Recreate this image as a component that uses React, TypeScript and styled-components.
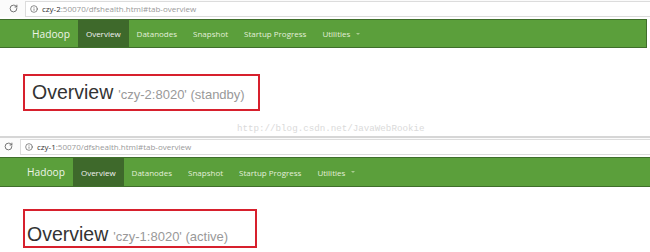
import { Info, RotateCw } from 'lucide-react'
import { createGlobalStyle, styled } from 'styled-components'

const Global = createGlobalStyle`
  html, body {
    margin: 0;
    padding: 0;
    background: #fff;
  }
  body {
    width: 650px;
    height: 252px;
    overflow: hidden;
    font-family: "Open Sans", "Noto Sans", sans-serif;
  }
`

const Page = styled.div`
  position: relative;
  display: flex;
  flex-direction: column;
  width: 650px;
  height: 252px;
`

const Screen = styled.section<{ $last?: boolean }>`
  display: flex;
  flex-direction: column;
  border-bottom: ${p => (p.$last ? 'none' : '2px solid #d6d6d6')};
`

const AddressBar = styled.div<{ $indent: number; $height: number }>`
  display: flex;
  align-items: center;
  gap: 7px;
  height: ${p => p.$height}px;
  padding-left: ${p => p.$indent}px;
  background: #fbfbfb;
  color: #5f6368;
`

const UrlBox = styled.div`
  flex: 1;
  display: flex;
  align-items: center;
  gap: 4px;
  height: 14px;
  padding-left: 4px;
  background: #fff;
  border: 1px solid #dcdcdc;
  border-right: none;
  font-size: 8px;
  color: #9a9a9a;
  white-space: nowrap;
  b {
    font-weight: 400;
    color: #333;
  }
`

const Navbar = styled.nav<{ $indent: number; $height: number; $edge?: boolean }>`
  display: flex;
  align-items: stretch;
  height: ${p => p.$height}px;
  margin-top: 2px;
  margin-right: ${p => (p.$edge ? 3 : 0)}px;
  padding-left: ${p => p.$indent}px;
  background: #5b9f3b;
  border-top: 1px solid #3f6e2b;
  border-bottom: 1px solid #3f6e2b;
  border-right: ${p => (p.$edge ? '1px solid #3f6e2b' : 'none')};
`

const Brand = styled.span`
  display: flex;
  align-items: center;
  margin-right: 8px;
  font-size: 10.2px;
  color: #eef5e9;
`

const NavItem = styled.span<{ $active?: boolean }>`
  display: flex;
  align-items: center;
  gap: 4px;
  padding: 0 8px;
  font-size: 8px;
  color: ${p => (p.$active ? '#f2f2f2' : '#e3efda')};
  background: ${p => (p.$active ? '#3e692b' : 'transparent')};
`

const Caret = styled.span`
  width: 0;
  height: 0;
  margin-left: 2px;
  border-left: 2px solid transparent;
  border-right: 2px solid transparent;
  border-top: 2px solid #a9cc92;
`

const Content = styled.div<{ $height: number; $top: number }>`
  height: ${p => p.$height}px;
  padding: ${p => p.$top}px 0 0 23px;
  box-sizing: border-box;
`

const Marked = styled.div<{ $width: number; $height: number; $left: number; $top: number }>`
  display: flex;
  align-items: baseline;
  box-sizing: border-box;
  width: ${p => p.$width}px;
  height: ${p => p.$height}px;
  padding: ${p => p.$top}px 0 0 ${p => p.$left}px;
  border: 2px solid #d7202d;
  font-family: "Liberation Sans", Arial, sans-serif;
  line-height: 22px;
  white-space: nowrap;
`

const Title = styled.h1`
  margin: 0;
  font-size: 19.5px;
  font-weight: 400;
  color: #333;
`

const Sub = styled.small`
  margin-left: 5px;
  font-size: 13px;
  color: #999;
`

const Watermark = styled.span`
  position: absolute;
  left: 237px;
  top: 123px;
  font-family: "Liberation Mono", "DejaVu Sans Mono", monospace;
  font-size: 9.2px;
  color: #dadada;
`

const tabs = ['Overview', 'Datanodes', 'Snapshot', 'Startup Progress']

type ShotProps = {
  host: string
  state: string
  indent: number
  addrHeight: number
  navHeight: number
  contentHeight: number
  box: { width: number; height: number; left: number; top: number; margin: number }
  edge?: boolean
  last?: boolean
}

const Shot = ({ host, state, indent, addrHeight, navHeight, contentHeight, box, edge, last }: ShotProps) => (
  <Screen $last={last}>
    <AddressBar $indent={indent} $height={addrHeight}>
      <RotateCw size={9} strokeWidth={2.4} color="#666" />
      <UrlBox>
        <Info size={8} strokeWidth={2} color="#555" />
        <span><b>{host}</b>:50070/dfshealth.html#tab-overview</span>
      </UrlBox>
    </AddressBar>
    <Navbar $indent={indent + 23} $height={navHeight} $edge={edge}>
      <Brand>Hadoop</Brand>
      {tabs.map((t, i) => <NavItem key={t} $active={i === 0}>{t}</NavItem>)}
      <NavItem>Utilities<Caret /></NavItem>
    </Navbar>
    <Content $height={contentHeight} $top={box.margin}>
      <Marked $width={box.width} $height={box.height} $left={box.left} $top={box.top}>
        <Title>Overview</Title>
        <Sub>'{host}:8020' ({state})</Sub>
      </Marked>
    </Content>
  </Screen>
)

export default function App() {
  return (
    <Page>
      <Global />
      <Shot
        host="czy-2"
        state="standby"
        indent={9}
        addrHeight={17}
        navHeight={27}
        contentHeight={88}
        edge
        box={{ width: 237, height: 37, left: 7, top: 5, margin: 26 }}
      />
      <Shot
        host="czy-1"
        state="active"
        indent={4}
        addrHeight={17}
        navHeight={28}
        contentHeight={65}
        last
        box={{ width: 234, height: 39, left: 2, top: 12, margin: 22 }}
      />
      <Watermark>http://blog.csdn.net/JavaWebRookie</Watermark>
    </Page>
  )
}
